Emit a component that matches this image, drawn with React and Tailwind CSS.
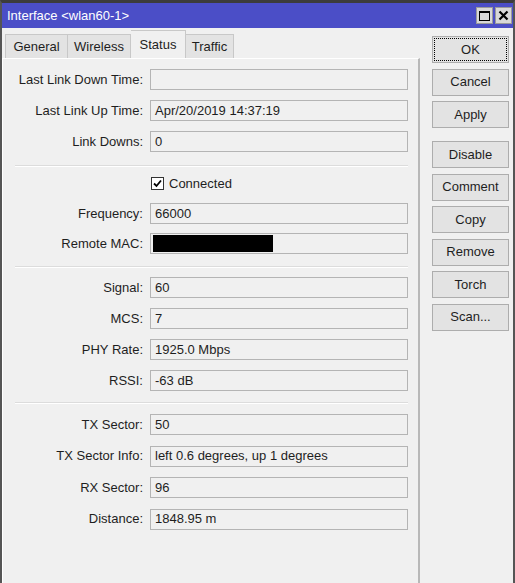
import React from "react";

const font = { fontFamily: '"Liberation Sans", Arial, sans-serif' };

function Field({ label, value, black }) {
  return (
    <div className="flex items-center h-[21px]">
      <div className="w-[145px] pr-[5px] text-right text-[13px] text-[#1e1e1e] whitespace-nowrap">{label}</div>
      <div className="ml-[2px] w-[258px] h-[21px] border border-[#b4b4b4] bg-[#f0f0f0] flex items-center px-[4px] text-[13px] text-[#1e1e1e] whitespace-nowrap overflow-hidden">
        {black ? <div className="w-[120px] h-[17px] bg-black -ml-[2px]" /> : value}
      </div>
    </div>
  );
}

function Sep() {
  return <div className="ml-[12px] w-[393px] h-[2px] border-t border-[#dcdcdc] border-b border-b-white" />;
}

function Btn({ children, focus }) {
  return (
    <div className="w-[77px] h-[27px] border border-[#adadad] bg-[#e3e3e3] flex items-center justify-center text-[13px] text-[#1e1e1e]">
      {focus ? (
        <div className="w-[73px] h-[23px] border border-dotted border-black flex items-center justify-center">{children}</div>
      ) : (
        children
      )}
    </div>
  );
}

export default function App() {
  return (
    <div style={font} className="w-[515px] h-[583px] bg-[#f0f0f0] border-t-[3px] border-t-[#3c3c3c] border-l-2 border-l-[#555] border-r-2 border-r-[#555] flex flex-col overflow-hidden">
      <div className="h-[25px] bg-[#4b4ec7] flex items-center justify-between pl-[5px] pr-[1px]">
        <span className="text-white text-[13px]">Interface &lt;wlan60-1&gt;</span>
        <div className="flex gap-[2px]">
          <div className="w-[17px] h-[17px] bg-[#d8d8d8] border border-[#9a9a9a] flex items-center justify-center">
            <div className="w-[11px] h-[10px] border border-black border-t-2" />
          </div>
          <div className="w-[17px] h-[17px] bg-[#d8d8d8] border border-[#9a9a9a] flex items-center justify-center">
            <svg width="11" height="11" viewBox="0 0 11 11">
              <path d="M1.5 1.5 L9.5 9.5 M9.5 1.5 L1.5 9.5" stroke="black" strokeWidth="2.2" />
            </svg>
          </div>
        </div>
      </div>
      <div className="flex flex-1">
        <div className="w-[418px] flex flex-col">
          <div className="h-[30px] flex items-end pl-[3px]">
            <div className="h-[24px] w-[63px] border border-[#c8c8c8] border-b-0 bg-[#e3e3e3] flex items-center justify-center text-[13px] text-[#1e1e1e]">General</div>
            <div className="h-[24px] w-[63px] border border-[#c8c8c8] border-b-0 border-l-0 bg-[#e3e3e3] flex items-center justify-center text-[13px] text-[#1e1e1e]">Wireless</div>
            <div className="h-[28px] w-[55px] border border-[#c8c8c8] border-b-0 border-l-0 bg-[#f0f0f0] flex items-start pt-[4px] justify-center text-[13px] text-[#1e1e1e]">Status</div>
            <div className="h-[24px] w-[48px] border border-[#c8c8c8] border-b-0 border-l-0 bg-[#e3e3e3] flex items-center justify-center text-[13px] text-[#1e1e1e]">Traffic</div>
          </div>
          <div className="flex-1 border-t border-t-white border-r-2 border-r-[#b8b8b8] border-l border-l-white pt-[10px] flex flex-col">
            <div className="flex flex-col gap-[10px]">
              <Field label="Last Link Down Time:" value="" />
              <Field label="Last Link Up Time:" value="Apr/20/2019 14:37:19" />
              <Field label="Link Downs:" value="0" />
            </div>
            <div className="mt-[13px] mb-[6px]"><Sep /></div>
            <div className="flex flex-col gap-[9px]">
              <div className="flex items-center h-[21px]">
                <div className="ml-[148px] w-[13px] h-[13px] border border-[#333] bg-white flex items-center justify-center">
                  <svg width="9" height="9" viewBox="0 0 9 9">
                    <path d="M1 4.5 L3.5 7 L8 1.5" stroke="black" strokeWidth="1.8" fill="none" />
                  </svg>
                </div>
                <span className="ml-[5px] text-[13px] text-[#1e1e1e]">Connected</span>
              </div>
              <Field label="Frequency:" value="66000" />
              <Field label="Remote MAC:" black />
            </div>
            <div className="mt-[12px] mb-[9px]"><Sep /></div>
            <div className="flex flex-col gap-[10px]">
              <Field label="Signal:" value="60" />
              <Field label="MCS:" value="7" />
              <Field label="PHY Rate:" value="1925.0 Mbps" />
              <Field label="RSSI:" value="-63 dB" />
            </div>
            <div className="mt-[11px] mb-[10px]"><Sep /></div>
            <div className="flex flex-col gap-[10.5px]">
              <Field label="TX Sector:" value="50" />
              <Field label="TX Sector Info:" value="left 0.6 degrees, up 1 degrees" />
              <Field label="RX Sector:" value="96" />
              <Field label="Distance:" value="1848.95 m" />
            </div>
          </div>
        </div>
        <div className="flex-1 pl-[12px] pt-[8px] flex flex-col">
          <div className="flex flex-col gap-[5.5px]">
            <Btn focus>OK</Btn>
            <Btn>Cancel</Btn>
            <Btn>Apply</Btn>
          </div>
          <div className="mt-[13px] flex flex-col gap-[5.5px]">
            <Btn>Disable</Btn>
            <Btn>Comment</Btn>
            <Btn>Copy</Btn>
            <Btn>Remove</Btn>
            <Btn>Torch</Btn>
            <Btn>Scan...</Btn>
          </div>
        </div>
      </div>
    </div>
  );
}
